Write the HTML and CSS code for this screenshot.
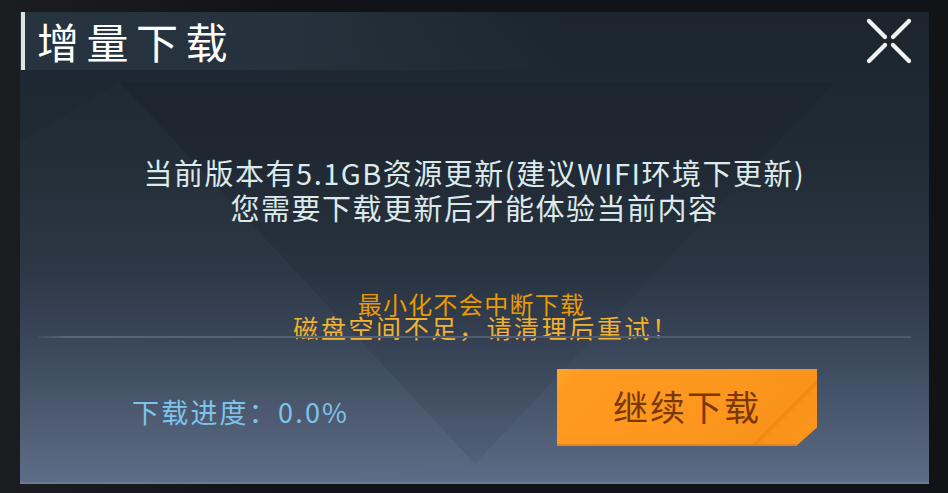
FILE: index.html
```html
<!DOCTYPE html>
<html lang="zh-CN">
<head>
<meta charset="utf-8">
<title>增量下载</title>
<link rel="stylesheet" href="styles.css">
</head>
<body>
<div class="panel">
  <svg class="deco" width="909" height="472" viewBox="0 0 909 472" aria-hidden="true">
    <polygon points="100,70 455,452 815,70" fill="#000" fill-opacity="0.05"/>
    <polygon points="0,130 100,70 455,452 300,472 0,472" fill="#fff" fill-opacity="0.012"/>
  </svg>
  <div class="header">
    <div class="title-wrap">
      <span class="accent"></span>
      <h1 class="title">增量下载</h1>
    </div>
    <button class="close" aria-label="关闭">
      <svg width="48" height="48" viewBox="0 0 48 48">
        <g stroke="#f2f4f4" stroke-width="4.2" stroke-linecap="round" fill="none">
          <line x1="4" y1="4" x2="20" y2="20"/>
          <line x1="28" y1="28" x2="44" y2="44"/>
          <line x1="44" y1="4" x2="28" y2="20"/>
          <line x1="20" y1="28" x2="4" y2="44"/>
        </g>
      </svg>
    </button>
  </div>
  <div class="message">
    <p class="msg-line">当前版本有5.1GB资源更新(建议WIFI环境下更新)</p>
    <p class="msg-line">您需要下载更新后才能体验当前内容</p>
  </div>
  <div class="notice">
    <p class="notice-a">最小化不会中断下载</p>
    <p class="notice-b">磁盘空间不足，请清理后重试！</p>
  </div>
  <div class="separator"></div>
  <div class="footer">
    <span class="progress">下载进度：0.0%</span>
    <button class="continue">继续下载</button>
  </div>
</div>
</body>
</html>
```

FILE: styles.css
```css
* { box-sizing: border-box; }

html, body {
  margin: 0;
  padding: 0;
}

body {
  width: 948px;
  height: 493px;
  overflow: hidden;
  background: linear-gradient(90deg, #1b1d20 0%, #16181b 15%, #111316 30%, #111316 100%);
  font-family: "Noto Sans CJK SC", "Noto Sans", sans-serif;
  padding: 12px 0 0 20px;
}

.panel {
  position: relative;
  width: 909px;
  height: 472px;
  display: flex;
  flex-direction: column;
  background: linear-gradient(180deg, #1c252e 0%, #212b35 30%, #2b3644 55%, #3a475b 72%, #4b596f 86%, #5c6c86 100%);
  border-bottom: 2px solid #6a7a92;
  overflow: hidden;
}

.deco {
  position: absolute;
  left: 0;
  top: 0;
  pointer-events: none;
}

.header {
  position: relative;
  height: 58px;
  flex: none;
  display: flex;
  align-items: center;
  justify-content: space-between;
  background: linear-gradient(90deg, #27333f 0%, #25313c 30%, rgba(37, 49, 60, 0) 60%);
}

.title-wrap {
  display: flex;
  align-items: center;
  height: 100%;
}

.accent {
  align-self: stretch;
  width: 4px;
  margin-left: 1px;
  background: #dde4df;
}

.title {
  margin: 0 0 0 12px;
  font-size: 42px;
  font-weight: 400;
  letter-spacing: 7.5px;
  color: #ffffff;
  line-height: 58px;
}

.close {
  margin-right: 16px;
  padding: 0;
  border: 0;
  background: none;
  width: 48px;
  height: 48px;
  display: flex;
}

.message {
  position: relative;
  margin-top: 85px;
  text-align: center;
}

.msg-line {
  margin: 0;
  font-size: 29px;
  line-height: 35px;
  letter-spacing: 1.5px;
  color: #dceaec;
}

.notice {
  position: relative;
  margin-top: 66px;
  text-align: center;
}

.notice-a {
  margin: 0;
  font-size: 24px;
  line-height: 26px;
  letter-spacing: 1.3px;
  color: #e99a00;
  padding-right: 6px;
}

.notice-b {
  margin: -3px 0 0;
  font-size: 25px;
  line-height: 26px;
  letter-spacing: 2.6px;
  color: #f2b22e;
  padding-left: 24px;
}

.separator {
  position: relative;
  margin: -4px 18px 0;
  height: 2px;
  background: linear-gradient(90deg, rgba(80, 96, 118, 0.2) 0%, #56667e 3%, #4f5e74 50%, #4a596e 100%);
}

.footer {
  position: relative;
  display: flex;
  align-items: center;
  margin-top: 31px;
  padding: 0 112px;
}

.progress {
  padding-top: 7px;
  font-size: 27px;
  letter-spacing: 2.2px;
  color: #7cc4ec;
}

.continue {
  margin-left: auto;
  width: 260px;
  height: 77px;
  border: 0;
  padding: 0 0 4px;
  font-family: "Noto Sans CJK SC", sans-serif;
  font-size: 35px;
  letter-spacing: 2px;
  color: #7a3806;
  background:
    linear-gradient(135deg, #ffa52a 0%, #ff9a20 8%, #fd961c 60%, #f9921a 80%, #f0880f 81%, #f9921a 82.5%, #fd961c 100%);
  clip-path: polygon(0 0, 100% 0, 100% 76%, 92% 100%, 0 100%);
  box-shadow: inset 0 -2px 0 #e5821a;
}
```
